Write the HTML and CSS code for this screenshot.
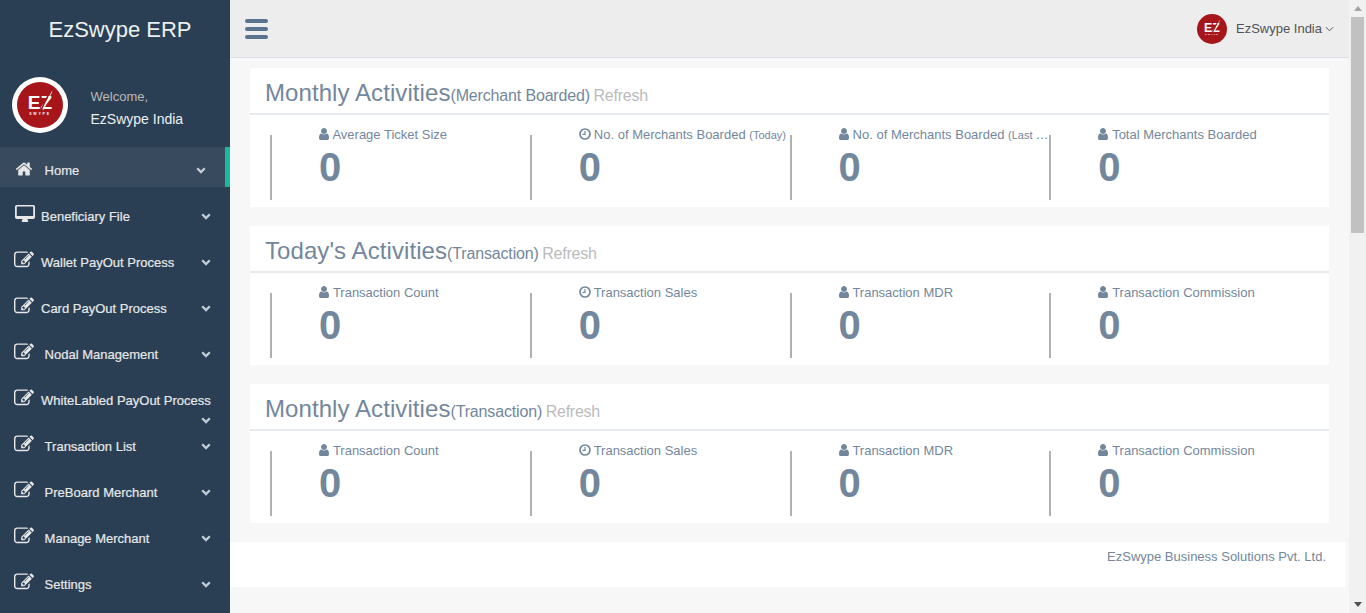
FILE: index.html
```html
<!DOCTYPE html>
<html lang="en">
<head>
    <meta charset="UTF-8">
    <meta name="viewport" content="width=device-width, initial-scale=1.0">
    <title>EzSwype ERP</title>
    <link rel="stylesheet" href="styles.css">
</head>
<body>
    <svg class="sprites" width="0" height="0">
        <symbol id="i-home" viewBox="0 0 1792 1792"><path d="M1472 992v480q0 26-19 45t-45 19h-384v-384h-256v384h-384q-26 0-45-19t-19-45v-480q0-1 .5-3t.5-3l575-474 575 474q1 2 1 6zm223-69l-62 74q-8 9-21 11h-3q-13 0-21-7l-692-577-692 577q-12 8-24 7-13-2-21-11l-62-74q-8-10-7-23.5t11-21.5l719-599q32-26 76-26t76 26l244 204v-195q0-14 9-23t23-9h192q14 0 23 9t9 23v408l219 182q10 8 11 21.5t-7 23.5z"/></symbol>
        <symbol id="i-edit" viewBox="0 0 1792 1792"><path d="M888 1184l116-116-152-152-116 116v56h96v96h56zm440-720q-16-16-33 1l-350 350q-17 17-1 33t33-1l350-350q17-17 1-33zm80 594v190q0 119-84.5 203.5t-203.5 84.5h-832q-119 0-203.5-84.5t-84.5-203.5v-832q0-119 84.5-203.5t203.5-84.5h832q63 0 117 25 15 7 18 23 3 17-9 29l-49 49q-14 14-32 8-23-6-45-6h-832q-66 0-113 47t-47 113v832q0 66 47 113t113 47h832q66 0 113-47t47-113v-126q0-13 9-22l64-64q15-15 35-7t20 29zm-96-738l288 288-672 672h-288v-288zm444 132l-92 92-288-288 92-92q28-28 68-28t68 28l152 152q28 28 28 68t-28 68z"/></symbol>
        <symbol id="i-desktop" viewBox="0 0 20 17"><path fill-rule="evenodd" d="M1.800 0h16.400A1.800 1.800 0 0 1 20 1.800v10.400a1.800 1.800 0 0 1-1.800 1.800H12.500c0 1 .8 1.600.8 2.200 0 .5-.3.800-.8.800h-5c-.5 0-.8-.3-.8-.8 0-.6.800-1.200.8-2.200H1.800A1.800 1.800 0 0 1 0 12.200V1.800A1.800 1.800 0 0 1 1.800 0zM1.800 1.500v9.500h16.400V1.500z"/></symbol>
        <symbol id="i-user" viewBox="0 0 1792 1792"><path d="M1536 1399q0 109-62.500 187t-150.500 78h-854q-88 0-150.500-78t-62.500-187q0-85 8.500-160.500t31.500-152 58.500-131 94-89 134.500-34.500q131 128 313 128t313-128q76 0 134.500 34.500t94 89 58.500 131 31.500 152 8.500 160.500zm-256-887q0 159-112.500 271.500t-271.500 112.500-271.500-112.500-112.500-271.500 112.500-271.500 271.500-112.500 271.500 112.500 112.500 271.500z"/></symbol>
        <symbol id="i-clock" viewBox="0 0 12 12"><circle cx="6" cy="6" r="5" fill="none" stroke="currentColor" stroke-width="1.700"/><path d="M6 3v3.400H3.500" fill="none" stroke="currentColor" stroke-width="1.200"/></symbol>
        <symbol id="i-chevron" viewBox="0 0 10 7"><path d="M1.200 1.300 5 5.100l3.800-3.800" fill="none" stroke="currentColor" stroke-width="2.300"/></symbol>
    </svg>

    <div class="app">
        <aside class="sidebar">
            <div class="brand">EzSwype ERP</div>
            <div class="profile">
                <div class="profile-pic">
                    <svg class="profile-logo" viewBox="0 0 46 46">
                        <circle cx="23" cy="23" r="23" fill="#a5151a"/>
                        <text x="23" y="27" text-anchor="middle" class="logo-letters">EZ</text>
                        <path d="M33 9.500 24 28" stroke="#a5151a" stroke-width="1.600"/>
                        <path d="M35 9.500 26 28" stroke="#fff" stroke-width=".8"/>
                        <text x="23" y="32.500" text-anchor="middle" class="logo-small">SWYPE</text>
                    </svg>
                </div>
                <div class="profile-info">
                    <span class="welcome">Welcome,</span>
                    <h2>EzSwype India</h2>
                </div>
            </div>
            <ul class="side-menu">
                <li class="menu-item active"><a><span class="icon"><svg class="ic-home"><use href="#i-home"/></svg></span>&nbsp;Home<svg class="chevron"><use href="#i-chevron"/></svg></a></li>
                <li class="menu-item"><a><span class="icon"><svg class="ic-desktop"><use href="#i-desktop"/></svg></span>Beneficiary File<svg class="chevron"><use href="#i-chevron"/></svg></a></li>
                <li class="menu-item"><a><span class="icon"><svg class="ic-edit"><use href="#i-edit"/></svg></span>Wallet PayOut Process<svg class="chevron"><use href="#i-chevron"/></svg></a></li>
                <li class="menu-item"><a><span class="icon"><svg class="ic-edit"><use href="#i-edit"/></svg></span>Card PayOut Process<svg class="chevron"><use href="#i-chevron"/></svg></a></li>
                <li class="menu-item"><a><span class="icon"><svg class="ic-edit"><use href="#i-edit"/></svg></span>&nbsp;Nodal Management<svg class="chevron"><use href="#i-chevron"/></svg></a></li>
                <li class="menu-item"><a><span class="icon"><svg class="ic-edit"><use href="#i-edit"/></svg></span>WhiteLabled PayOut Process<svg class="chevron"><use href="#i-chevron"/></svg></a></li>
                <li class="menu-item"><a><span class="icon"><svg class="ic-edit"><use href="#i-edit"/></svg></span>&nbsp;Transaction List<svg class="chevron"><use href="#i-chevron"/></svg></a></li>
                <li class="menu-item"><a><span class="icon"><svg class="ic-edit"><use href="#i-edit"/></svg></span>&nbsp;PreBoard Merchant<svg class="chevron"><use href="#i-chevron"/></svg></a></li>
                <li class="menu-item"><a><span class="icon"><svg class="ic-edit"><use href="#i-edit"/></svg></span>&nbsp;Manage Merchant<svg class="chevron"><use href="#i-chevron"/></svg></a></li>
                <li class="menu-item"><a><span class="icon"><svg class="ic-edit"><use href="#i-edit"/></svg></span>&nbsp;Settings<svg class="chevron"><use href="#i-chevron"/></svg></a></li>
            </ul>
        </aside>

        <div class="main">
            <header class="topbar">
                <div class="menu-toggle"><span></span><span></span><span></span></div>
                <div class="user-menu">
                    <svg class="user-logo" viewBox="0 0 46 46">
                        <circle cx="23" cy="23" r="23" fill="#a5151a"/>
                        <text x="23" y="27" text-anchor="middle" class="logo-letters">EZ</text>
                        <path d="M33 9.500 24 28" stroke="#a5151a" stroke-width="1.600"/>
                        <path d="M35 9.500 26 28" stroke="#fff" stroke-width=".8"/>
                        <text x="23" y="32.500" text-anchor="middle" class="logo-small">SWYPE</text>
                    </svg>
                    <span>EzSwype India</span>
                    <svg class="angle" viewBox="0 0 10 6"><path d="M1 1l4 4 4-4" fill="none" stroke="currentColor" stroke-width="1.100"/></svg>
                </div>
            </header>

            <div class="content">
                <section class="panel">
                    <div class="panel-title"><h3>Monthly Activities</h3><small>(Merchant Boarded)</small> <a class="refresh">Refresh</a></div>
                    <div class="tiles">
                        <div class="tile"><div class="tile-top"><svg class="ic-user"><use href="#i-user"/></svg> Average Ticket Size</div><div class="count">0</div></div>
                        <div class="tile"><div class="tile-top"><svg class="ic-clock"><use href="#i-clock"/></svg> No. of Merchants Boarded <small>(Today)</small></div><div class="count">0</div></div>
                        <div class="tile"><div class="tile-top"><svg class="ic-user"><use href="#i-user"/></svg> No. of Merchants Boarded <small>(Last Month)</small></div><div class="count">0</div></div>
                        <div class="tile"><div class="tile-top"><svg class="ic-user"><use href="#i-user"/></svg> Total Merchants Boarded</div><div class="count">0</div></div>
                    </div>
                </section>

                <section class="panel">
                    <div class="panel-title"><h3>Today's Activities</h3><small>(Transaction)</small> <a class="refresh">Refresh</a></div>
                    <div class="tiles">
                        <div class="tile"><div class="tile-top"><svg class="ic-user"><use href="#i-user"/></svg> Transaction Count</div><div class="count">0</div></div>
                        <div class="tile"><div class="tile-top"><svg class="ic-clock"><use href="#i-clock"/></svg> Transaction Sales</div><div class="count">0</div></div>
                        <div class="tile"><div class="tile-top"><svg class="ic-user"><use href="#i-user"/></svg> Transaction MDR</div><div class="count">0</div></div>
                        <div class="tile"><div class="tile-top"><svg class="ic-user"><use href="#i-user"/></svg> Transaction Commission</div><div class="count">0</div></div>
                    </div>
                </section>

                <section class="panel">
                    <div class="panel-title"><h3>Monthly Activities</h3><small>(Transaction)</small> <a class="refresh">Refresh</a></div>
                    <div class="tiles">
                        <div class="tile"><div class="tile-top"><svg class="ic-user"><use href="#i-user"/></svg> Transaction Count</div><div class="count">0</div></div>
                        <div class="tile"><div class="tile-top"><svg class="ic-clock"><use href="#i-clock"/></svg> Transaction Sales</div><div class="count">0</div></div>
                        <div class="tile"><div class="tile-top"><svg class="ic-user"><use href="#i-user"/></svg> Transaction MDR</div><div class="count">0</div></div>
                        <div class="tile"><div class="tile-top"><svg class="ic-user"><use href="#i-user"/></svg> Transaction Commission</div><div class="count">0</div></div>
                    </div>
                </section>
            </div>

            <footer class="footer">EzSwype Business Solutions Pvt. Ltd.</footer>
        </div>

        <div class="scrollbar">
            <div class="arrow-up"></div>
            <div class="thumb"></div>
            <div class="track"></div>
            <div class="arrow-down"></div>
        </div>
    </div>
</body>
</html>
```

FILE: styles.css
```css
* {
    box-sizing: border-box;
}
html, body {
    height: 100%;
}
body {
    margin: 0;
    overflow: hidden;
    font-family: "Liberation Sans", Arial, sans-serif;
    font-size: 13px;
    color: #73879C;
    background: #F7F7F7;
}
.sprites {
    display: block;
    height: 0;
}
.app {
    display: flex;
    height: 613px;
    overflow: hidden;
}
.logo-letters {
    font-family: "Liberation Sans", Arial, sans-serif;
    font-size: 19px;
    font-weight: 700;
    fill: #fff;
}
.logo-small {
    font-family: "Liberation Sans", Arial, sans-serif;
    font-size: 3.500px;
    font-weight: 700;
    fill: #fff;
    letter-spacing: 1.800px;
}

/* sidebar */
.sidebar {
    width: 230px;
    flex: none;
    background: #2A3F54;
    color: #ECF0F1;
    overflow: hidden;
}
.brand {
    height: 57px;
    padding-left: 10px;
    text-align: center;
    font-size: 22px;
    line-height: 59px;
}
.profile {
    display: flex;
    height: 90px;
    padding: 20px 0 0 12px;
}
.profile-pic {
    width: 56px;
    height: 56px;
    padding: 5px;
    border-radius: 50%;
    background: #fff;
}
.profile-logo {
    display: block;
    width: 46px;
    height: 46px;
}
.profile-info {
    padding: 11px 0 0 22.500px;
}
.welcome {
    display: block;
    color: #BAB8B8;
    line-height: 18px;
}
.profile-info h2 {
    margin: 3px 0 0;
    font-size: 14px;
    font-weight: 400;
    line-height: 20px;
}
.side-menu {
    margin: 0;
    padding: 0;
    list-style: none;
}
.menu-item {
    height: 46px;
}
.menu-item a {
    display: block;
    height: 46px;
    padding: 14px 19px 0 15px;
    line-height: 20px;
    font-weight: 400;
    color: #E7E7E7;
    -webkit-text-stroke: .2px #E7E7E7;
}
.menu-item.active a {
    height: 40px;
    background: #374A5E;
    border-right: 5px solid #1ABB9C;
}
.icon {
    display: inline-block;
    width: 26px;
    height: 18px;
    vertical-align: top;
}
.icon svg {
    display: block;
    fill: #E7E7E7;
}
.ic-home {
    width: 18px;
    height: 18px;
    margin-top: -1px;
}
.ic-desktop {
    width: 20px;
    height: 17px;
    margin-top: -2px;
}
.ic-edit {
    width: 20px;
    height: 20px;
    margin: -3px 0 0 -1px;
}
.chevron {
    float: right;
    width: 10px;
    height: 7px;
    margin-top: 6px;
    color: #C4CCD4;
}

/* top nav */
.main {
    flex: 1;
    min-width: 0;
}
.topbar {
    display: flex;
    align-items: center;
    justify-content: space-between;
    height: 58px;
    padding: 0 15px 0 15px;
    background: #EDEDED;
    border-bottom: 1px solid #D9DEE4;
}
.menu-toggle {
    display: flex;
    flex-direction: column;
    gap: 4px;
    width: 23px;
}
.menu-toggle span {
    height: 4px;
    border-radius: 2px;
    background: #5A738E;
}
.user-menu {
    display: flex;
    align-items: center;
    color: #515356;
}
.user-logo {
    width: 30px;
    height: 30px;
    margin-right: 9px;
}
.angle {
    width: 9px;
    height: 6px;
    margin-left: 3px;
}

/* content */
.content {
    padding: 10px 20px 0;
}
.panel {
    height: 139px;
    margin-bottom: 19px;
    background: #fff;
}
.panel-title {
    height: 47px;
    padding: 8px 15px 0;
    border-bottom: 2px solid #E6E9ED;
    line-height: 33px;
    white-space: nowrap;
}
.panel-title h3 {
    display: inline;
    margin: 0;
    font-size: 24px;
    font-weight: 400;
    letter-spacing: .08px;
}
.panel-title small {
    font-size: 16px;
    letter-spacing: -.16px;
}
.refresh {
    font-size: 16px;
    letter-spacing: -.25px;
    color: #BBB;
}
.tiles {
    display: grid;
    grid-template-columns: repeat(4, 259.750px);
    padding: 11px 0 0 20px;
}
.tile {
    position: relative;
    padding-left: 49px;
    min-width: 0;
}
.tile:before {
    content: "";
    position: absolute;
    left: 0;
    top: 9px;
    height: 65px;
    border-left: 2px solid #ADB2B5;
}
.tile-top {
    height: 18px;
    line-height: 18px;
    white-space: nowrap;
    overflow: hidden;
    text-overflow: ellipsis;
}
.tile-top small {
    font-size: 11px;
}
.ic-user {
    width: 14px;
    height: 14px;
    margin: 0 -1.500px 0 -2px;
    fill: currentColor;
    vertical-align: -2px;
}
.ic-clock {
    width: 12px;
    height: 12px;
    margin-right: -.5px;
    vertical-align: -1px;
}
.count {
    font-size: 40px;
    font-weight: 700;
    line-height: 47px;
}

/* footer */
.footer {
    height: 45px;
    margin: 0 3px 0 0;
    padding: 6px 20px 0;
    background: #fff;
    text-align: right;
    line-height: 17px;
}

/* scrollbar */
.scrollbar {
    display: flex;
    flex-direction: column;
    align-items: center;
    width: 17px;
    flex: none;
    background: #F1F1F1;
}
.arrow-up {
    flex: none;
    width: 0;
    height: 5px;
    margin: 6px 0 6px;
    border-left: 4px solid transparent;
    border-right: 4px solid transparent;
    border-bottom: 5px solid #A3A3A3;
}
.thumb {
    flex: none;
    width: 13px;
    height: 216px;
    background: #C1C1C1;
}
.track {
    flex: 1;
}
.arrow-down {
    flex: none;
    width: 0;
    height: 5px;
    margin: 6px 0 6px;
    border-left: 4px solid transparent;
    border-right: 4px solid transparent;
    border-top: 5px solid #505050;
}
```
